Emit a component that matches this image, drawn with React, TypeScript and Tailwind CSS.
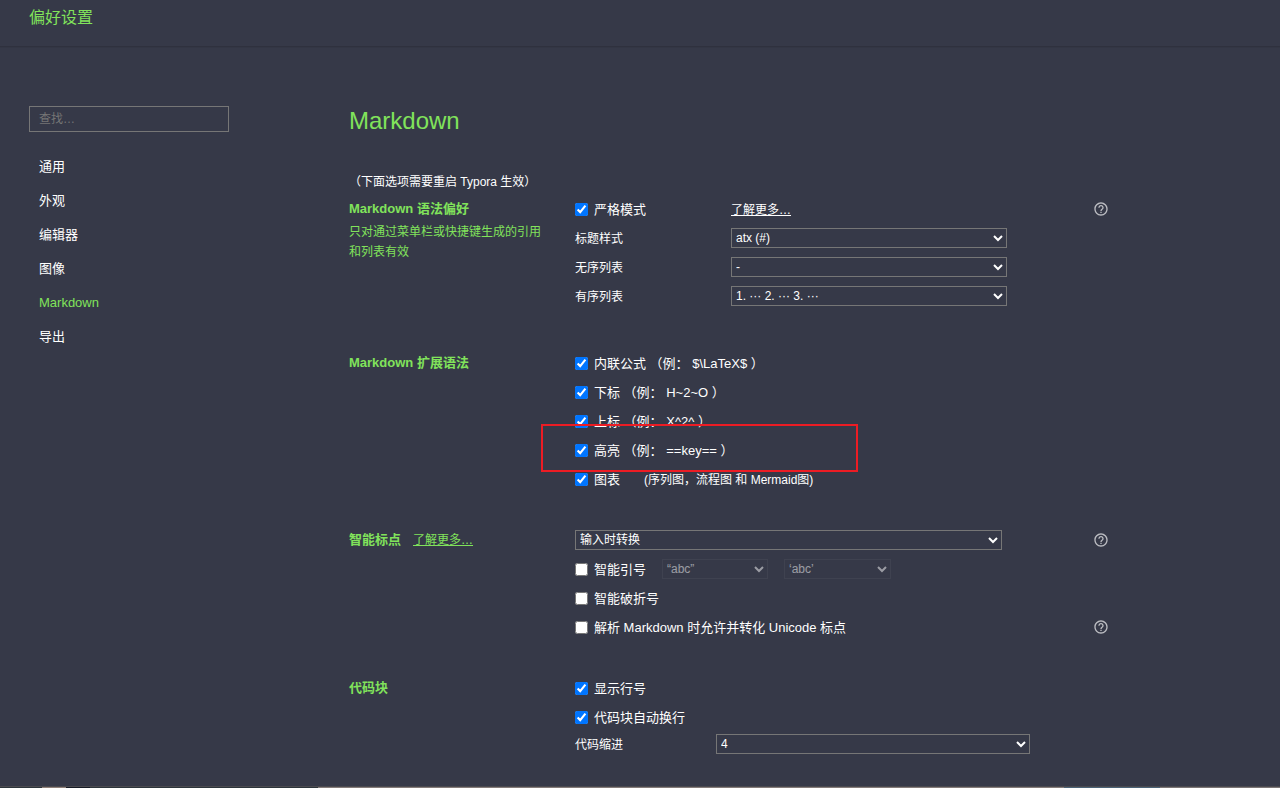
import type { ReactNode } from "react";
import { MdHelpOutline } from "react-icons/md";

const navItems = ["通用", "外观", "编辑器", "图像", "Markdown", "导出"];

const extensions = [
  { id: "math", label: "内联公式 （例： $\\LaTeX$ ）" },
  { id: "sub", label: "下标 （例： H~2~O ）" },
  { id: "sup", label: "上标 （例： X^2^ ）" },
  { id: "highlight", label: "高亮 （例： ==key== ）", marked: true },
  { id: "diagram", label: "图表", note: "(序列图，流程图 和 Mermaid图)" },
];

function Section({ title, aside, children }: { title: string; aside?: ReactNode; children: ReactNode }) {
  return (
    <section className="grid grid-cols-[226px_1fr]">
      <div className="pt-px pr-6 text-[#81e35b]">
        <h2 className="inline text-[13px] leading-[26px] font-bold">{title}</h2>
        {aside}
      </div>
      <div>{children}</div>
    </section>
  );
}

function Row({ children }: { children: ReactNode }) {
  return <div className="relative flex h-[29px] items-center">{children}</div>;
}

function Check({ id, label, checked = false }: { id: string; label: string; checked?: boolean }) {
  return (
    <>
      <input id={id} type="checkbox" defaultChecked={checked} className="mr-[6px] size-[13px]" />
      <label htmlFor={id} className="text-[13px] whitespace-pre">{label}</label>
    </>
  );
}

function Select({ id, label, value, className }: { id: string; label?: string; value: string; className: string }) {
  return (
    <select
      id={id}
      aria-label={label}
      className={"mb-px h-5 border border-[#767676] bg-[#363948] text-xs text-white disabled:border-[#484b58] disabled:opacity-50 " + className}
    >
      <option>{value}</option>
    </select>
  );
}

function Help() {
  return (
    <button type="button" aria-label="帮助" className="mb-[2px] ml-auto text-[#bcbdc2]">
      <MdHelpOutline className="size-4" />
    </button>
  );
}

export default function App() {
  return (
    <div className="min-h-screen bg-[#363948] font-['Liberation_Sans','Noto_Sans_CJK_SC',sans-serif] text-white">
      <header className="h-[47px] border-b border-[#2f313e] px-[29px] pt-[6px] shadow-2xs">
        <h1 className="text-base leading-6 text-[#81e35b]">偏好设置</h1>
      </header>
      <div className="flex gap-[120px] px-[29px] pt-[59px] pb-[30px]">
        <aside className="w-[200px] shrink-0">
          <input
            type="search"
            aria-label="查找"
            placeholder="查找…"
            className="mb-[18px] block h-[26px] w-full border border-[#767676] px-[9px] text-xs placeholder:text-[#757575]"
          />
          <nav className="flex flex-col text-[13px] leading-[34px]">
            {navItems.map((item) => (
              <a key={item} href="#" className={item === "Markdown" ? "pl-[10px] text-[#81e35b]" : "pl-[10px]"}>
                {item}
              </a>
            ))}
          </nav>
        </aside>
        <main className="max-w-[760px] flex-1">
          <h1 className="mb-9 text-2xl leading-[30px] text-[#81e35b]">Markdown</h1>
          <p className="mb-[3px] text-xs leading-5">（下面选项需要重启 Typora 生效）</p>
          <Section
            title="Markdown 语法偏好"
            aside={<p className="text-xs leading-5">只对通过菜单栏或快捷键生成的引用和列表有效</p>}
          >
            <Row>
              <div className="flex w-[156px] items-center">
                <Check id="strict" label="严格模式" checked />
              </div>
              <a href="#" className="text-xs underline">了解更多…</a>
              <Help />
            </Row>
            <Row>
              <label htmlFor="heading" className="w-[156px] text-xs">标题样式</label>
              <Select id="heading" value="atx (#)" className="w-[276px]" />
            </Row>
            <Row>
              <label htmlFor="unordered" className="w-[156px] text-xs">无序列表</label>
              <Select id="unordered" value="-" className="w-[276px]" />
            </Row>
            <Row>
              <label htmlFor="ordered" className="w-[156px] text-xs">有序列表</label>
              <Select id="ordered" value="1. ··· 2. ··· 3. ···" className="w-[276px]" />
            </Row>
          </Section>
          <div className="mt-[38px] flex flex-col gap-8">
            <Section title="Markdown 扩展语法">
              {extensions.map((ext) => (
                <Row key={ext.id}>
                  <Check id={ext.id} label={ext.label} checked />
                  {ext.note && <span className="ml-6 text-xs">{ext.note}</span>}
                  {ext.marked && (
                    <span className="pointer-events-none absolute -top-3 -left-[34px] z-10 h-12 w-[317px] border-2 border-[#ec1c24]" />
                  )}
                </Row>
              ))}
            </Section>
            <Section title="智能标点" aside={<a href="#" className="ml-3 text-xs underline">了解更多…</a>}>
              <Row>
                <Select id="convert" label="智能标点" value="输入时转换" className="w-[427px]" />
                <Help />
              </Row>
              <Row>
                <Check id="quotes" label="智能引号" />
                <fieldset disabled className="ml-4 flex gap-4">
                  <Select id="double" label="双引号" value="“abc”" className="w-[106px]" />
                  <Select id="single" label="单引号" value="‘abc’" className="w-[107px]" />
                </fieldset>
              </Row>
              <Row>
                <Check id="dashes" label="智能破折号" />
              </Row>
              <Row>
                <Check id="unicode" label="解析 Markdown 时允许并转化 Unicode 标点" />
                <Help />
              </Row>
            </Section>
            <Section title="代码块">
              <Row>
                <Check id="lines" label="显示行号" checked />
              </Row>
              <Row>
                <Check id="wrap" label="代码块自动换行" checked />
              </Row>
              <div className="flex h-[25px] items-center">
                <label htmlFor="indent" className="w-[141px] text-xs">代码缩进</label>
                <Select id="indent" value="4" className="w-[314px]" />
              </div>
            </Section>
          </div>
        </main>
      </div>
      <footer className="-mt-px flex h-[2px] border-t border-[#4b4a50]">
        <div className="w-[42px] bg-[#2d353b]" />
        <div className="w-6 bg-[#8f8079]" />
        <div className="w-6 bg-[#161b26]" />
        <div className="w-[228px] bg-[#2d353b]" />
        <div className="flex-1 bg-[#857c7a]" />
        <div className="w-24 bg-[#4b6377]" />
        <div className="w-[120px] bg-[#7c7676]" />
      </footer>
    </div>
  );
}
